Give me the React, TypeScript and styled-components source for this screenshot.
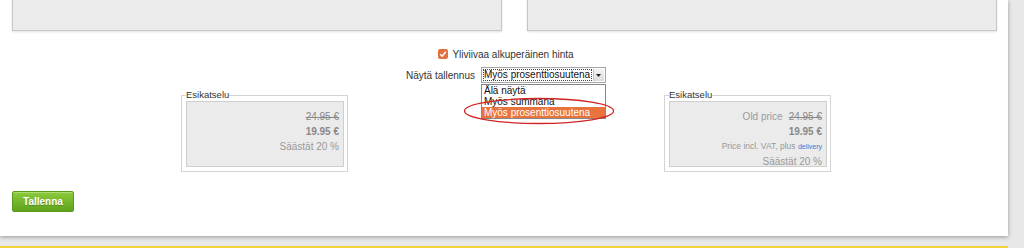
import styled, { createGlobalStyle } from "styled-components";

const GlobalStyle = createGlobalStyle`
  html, body {
    margin: 0;
    padding: 0;
    background: #e8e8e8;
    font-family: "Liberation Sans", Arial, sans-serif;
    color: #333;
  }
`;

const Page = styled.div`
  width: 1024px;
  height: 248px;
  overflow: hidden;
`;

const Panel = styled.div`
  width: 1008px;
  height: 236px;
  background: #fff;
  box-shadow: 0 1px 4px rgba(0, 0, 0, 0.35);
  display: flex;
  flex-direction: column;
  position: relative;
`;

const NextPanel = styled.div`
  width: 1008px;
  height: 10px;
  margin-top: 10px;
  background: #fafafa;
  border-top: 2px solid #f2d43a;
`;

const TopRow = styled.div`
  display: flex;
  padding-left: 12px;
  gap: 25px;
`;

const TopBox = styled.div<{ $w: number }>`
  width: ${({ $w }) => $w}px;
  height: 30px;
  background: #ebebeb;
  border: 1px solid #c6c6c6;
  border-top: none;
  box-shadow: 0 1px 2px rgba(0, 0, 0, 0.12);
`;

const CheckRow = styled.label`
  display: flex;
  align-items: center;
  justify-content: center;
  gap: 4px;
  margin-top: 16px;
  height: 14px;
  font-size: 10px;
  padding-left: 4px;
`;

const CheckMark = styled.span`
  width: 10px;
  height: 10px;
  border-radius: 2px;
  background: #e2713f;
  display: inline-flex;
  align-items: center;
  justify-content: center;
`;

const SelectRow = styled.div`
  display: flex;
  align-items: center;
  justify-content: center;
  gap: 6px;
  margin-top: 6px;
  height: 16px;
  font-size: 10px;
  padding-left: 4px;
`;

const SelectWrap = styled.div`
  position: relative;
  width: 125px;
  height: 16px;
`;

const SelectBox = styled.div`
  box-sizing: border-box;
  width: 100%;
  height: 100%;
  border: 1px solid #a5a5a5;
  background: #fff;
  display: flex;
  align-items: stretch;
  padding: 1px;
`;

const SelectValue = styled.div`
  flex: 1;
  outline: 1px dotted #444;
  outline-offset: -1px;
  font-size: 10px;
  line-height: 12px;
  padding-left: 1px;
  color: #111;
  white-space: nowrap;
  overflow: hidden;
`;

const ArrowButton = styled.div`
  width: 10px;
  margin-left: 1px;
  background: linear-gradient(#f4f4f4, #dcdcdc);
  border-left: 1px solid #c4c4c4;
  display: flex;
  align-items: center;
  justify-content: center;
`;

const DropList = styled.div`
  position: absolute;
  left: 0;
  top: 17px;
  width: 125px;
  box-sizing: border-box;
  border: 1px solid #888;
  background: #fff;
  z-index: 2;
`;

const Option = styled.div<{ $active?: boolean }>`
  height: 11px;
  line-height: 11px;
  font-size: 10px;
  padding-left: 2px;
  color: ${({ $active }) => ($active ? "#fff" : "#111")};
  background: ${({ $active }) => ($active ? "#e8733c" : "transparent")};
  white-space: nowrap;
`;

const Ellipse = styled.svg`
  position: absolute;
  left: -18px;
  top: 30px;
  z-index: 3;
  pointer-events: none;
`;

const PreviewRow = styled.div`
  display: flex;
  padding-left: 181px;
  gap: 316px;
  margin-top: 6px;
`;

const Fieldset = styled.fieldset`
  margin: 0;
  width: 167px;
  height: 83px;
  box-sizing: border-box;
  border: 1px solid #d4d4d4;
  padding: 0 3px 4px 4px;
`;

const Legend = styled.legend`
  padding: 0;
  margin-left: 0;
  font-size: 9.5px;
  line-height: 12px;
  color: #333;
`;

const PreviewBox = styled.div`
  height: 100%;
  box-sizing: border-box;
  background: #ebebeb;
  border: 1px solid #cfcfcf;
  padding: 7px 4px 0 0;
  display: flex;
  flex-direction: column;
  align-items: flex-end;
`;

const Line = styled.div<{ $small?: boolean }>`
  height: 15px;
  line-height: 15px;
  font-size: ${({ $small }) => ($small ? 8.5 : 10)}px;
  color: #999;
  white-space: nowrap;
`;

const Old = styled.span`
  text-decoration: line-through;
  color: #888;
  margin-left: 6px;
`;

const Price = styled.span`
  font-weight: bold;
  color: #888;
`;

const Delivery = styled.span`
  color: #3a7bd5;
  font-size: 7px;
`;

const ButtonRow = styled.div`
  padding-left: 12px;
  margin-top: 19px;
`;

const Button = styled.button`
  width: 62px;
  height: 21px;
  border: 1px solid #5a9a1c;
  border-radius: 2px;
  background: linear-gradient(#8ccb3c, #5fa21b);
  color: #fff;
  font-family: "Liberation Sans", Arial, sans-serif;
  font-weight: bold;
  font-size: 10px;
  text-shadow: 0 1px 0 rgba(0, 0, 0, 0.25);
  padding: 0;
  box-shadow: inset 0 1px 0 rgba(255, 255, 255, 0.3);
`;

export default function App() {
  return (
    <Page>
      <GlobalStyle />
      <Panel>
        <TopRow>
          <TopBox $w={488} />
          <TopBox $w={468} />
        </TopRow>
        <CheckRow>
          <CheckMark>
            <svg width="8" height="8" viewBox="0 0 8 8">
              <path d="M1.2 4.2 L3.2 6.2 L6.8 1.8" stroke="#fff" strokeWidth="1.5" fill="none" />
            </svg>
          </CheckMark>
          Yliviivaa alkuperäinen hinta
        </CheckRow>
        <SelectRow>
          <span>Näytä tallennus</span>
          <SelectWrap>
            <SelectBox>
              <SelectValue>Myös prosenttiosuutena</SelectValue>
              <ArrowButton>
                <svg width="5" height="3" viewBox="0 0 5 3">
                  <path d="M0 0 H5 L2.5 3 Z" fill="#222" />
                </svg>
              </ArrowButton>
            </SelectBox>
            <DropList>
              <Option>Älä näytä</Option>
              <Option>Myös summana</Option>
              <Option $active>Myös prosenttiosuutena</Option>
            </DropList>
            <Ellipse width="152" height="28" viewBox="0 0 152 28">
              <ellipse cx="76" cy="14" rx="74.5" ry="12.5" fill="none" stroke="#d32424" strokeWidth="1.3" />
            </Ellipse>
          </SelectWrap>
        </SelectRow>
        <PreviewRow>
          <Fieldset>
            <Legend>Esikatselu</Legend>
            <PreviewBox>
              <Line>
                <Old>24.95 €</Old>
              </Line>
              <Line>
                <Price>19.95 €</Price>
              </Line>
              <Line>Säästät 20 %</Line>
            </PreviewBox>
          </Fieldset>
          <Fieldset>
            <Legend>Esikatselu</Legend>
            <PreviewBox>
              <Line>
                Old price<Old>24.95 €</Old>
              </Line>
              <Line>
                <Price>19.95 €</Price>
              </Line>
              <Line $small>
                Price incl. VAT, plus <Delivery>delivery</Delivery>
              </Line>
              <Line>Säästät 20 %</Line>
            </PreviewBox>
          </Fieldset>
        </PreviewRow>
        <ButtonRow>
          <Button>Tallenna</Button>
        </ButtonRow>
      </Panel>
      <NextPanel />
    </Page>
  );
}
